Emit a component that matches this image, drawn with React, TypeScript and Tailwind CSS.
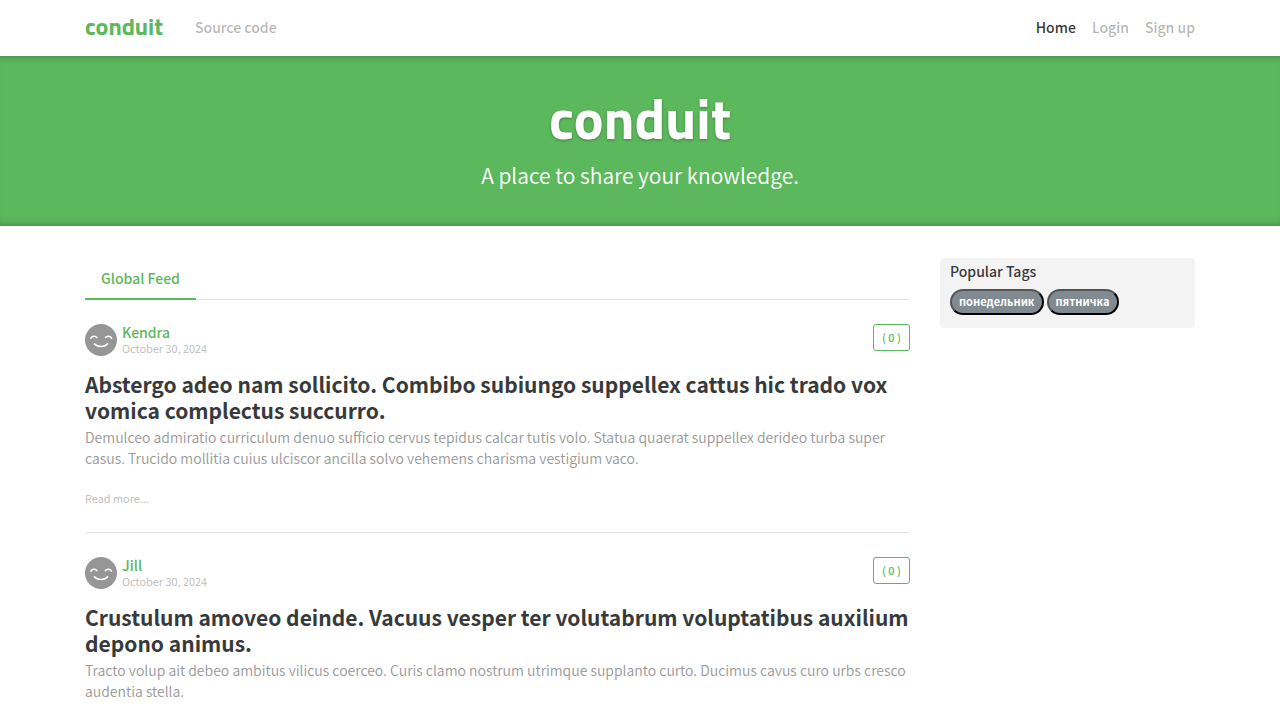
type Article = {
  author: string;
  date: string;
  title: string;
  description: string;
  favorites: number;
};

const articles: Article[] = [
  {
    author: 'Kendra',
    date: 'October 30, 2024',
    title: 'Abstergo adeo nam sollicito. Combibo subiungo suppellex cattus hic trado vox vomica complectus succurro.',
    description:
      'Demulceo admiratio curriculum denuo sufficio cervus tepidus calcar tutis volo. Statua quaerat suppellex derideo turba super casus. Trucido mollitia cuius ulciscor ancilla solvo vehemens charisma vestigium vaco.',
    favorites: 0,
  },
  {
    author: 'Jill',
    date: 'October 30, 2024',
    title: 'Crustulum amoveo deinde. Vacuus vesper ter volutabrum voluptatibus auxilium depono animus.',
    description:
      'Tracto volup ait debeo ambitus vilicus coerceo. Curis clamo nostrum utrimque supplanto curto. Ducimus cavus curo urbs cresco audentia stella.',
    favorites: 0,
  },
];

const tags = ['понедельник', 'пятничка'];

function Smiley() {
  return (
    <svg viewBox="0 0 32 32" className="size-8 shrink-0" aria-hidden="true">
      <circle cx="16" cy="16" r="16" fill="#969696" />
      <g fill="none" stroke="#fff" strokeWidth="1.6" strokeLinecap="round">
        <path d="M5.9 14.2C6.7 11.9 10.7 11.6 11.9 13.6" />
        <path d="M20.5 13.6C21.7 11.6 25.7 11.9 26.5 14.2" />
        <path d="M9.4 19.8C12 23.4 20 23.4 22.6 19.8" />
      </g>
    </svg>
  );
}

function Navbar() {
  return (
    <nav className="mx-auto flex h-14 w-full max-w-[1140px] items-center px-[15px] pb-0.5">
      <a href="#home" className="mr-8 pb-0.5 font-[Titillium_Web,Noto_Sans_CJK_SC,sans-serif] text-[24px] leading-8 font-bold text-[#5cb85c]">
        conduit
      </a>
      <a href="#source" className="text-black/30">Source code</a>
      <div className="ml-auto flex gap-4">
        <a href="#home" className="text-black/80">Home</a>
        <a href="#login" className="text-black/30">Login</a>
        <a href="#signup" className="text-black/30">Sign up</a>
      </div>
    </nav>
  );
}

function Banner() {
  return (
    <header className="bg-[#5cb85c] px-4 pt-8 pb-[33px] text-center text-white shadow-[inset_0_8px_8px_-8px_rgba(0,0,0,0.3),inset_0_-8px_8px_-8px_rgba(0,0,0,0.3)]">
      <h1 className="mb-[7px] font-[Titillium_Web,Noto_Sans_CJK_SC,sans-serif] text-[56px] leading-[62px] font-bold [text-shadow:0_1px_3px_rgba(0,0,0,0.3)]">
        conduit
      </h1>
      <p className="text-[21px] leading-9 font-[350]">A place to share your knowledge.</p>
    </header>
  );
}

function ArticlePreview({ article }: { article: Article }) {
  return (
    <article className="border-t border-black/10 py-6">
      <div className="mb-[15px] flex h-8 items-start">
        <a href="#profile" aria-label={article.author}><Smiley /></a>
        <div className="ml-[5px] flex flex-col">
          <a href="#profile" className="leading-4 text-[#5cb85c]">{article.author}</a>
          <span className="text-[11px] leading-4 font-[350] text-[#bbb]">{article.date}</span>
        </div>
        <button type="button" className="ml-auto h-[27px] rounded-[3px] border border-[#5cb85c] px-2 pb-0.5 text-[11px] leading-4 text-[#5cb85c]">
          ( {article.favorites} )
        </button>
      </div>
      <a href="#article" className="block">
        <h2 className="mb-1 text-[21px] leading-[26px] font-bold text-[#373a3c]">{article.title}</h2>
        <p className="mb-[19px] leading-[21px] font-[350] text-[#999]">{article.description}</p>
        <span className="block text-[11px] leading-5 font-[350] text-[#bbb]">Read more...</span>
      </a>
    </article>
  );
}

export default function App() {
  return (
    <div className="min-h-screen bg-white font-[Source_Sans_Pro,Noto_Sans_CJK_SC,sans-serif] text-[14px] leading-6 font-medium text-[#373a3c]">
      <Navbar />
      <Banner />
      <main className="mx-auto mt-8 flex w-full max-w-[1140px] items-start">
        <section className="min-w-0 flex-1 px-[15px]">
          <div className="-mb-px flex">
            <a href="#feed" className="border-b-2 border-[#5cb85c] px-4 py-2 text-[#5cb85c]">Global Feed</a>
          </div>
          {articles.map((article) => (
            <ArticlePreview key={article.author} article={article} />
          ))}
        </section>
        <aside className="w-1/4 px-[15px]">
          <div className="rounded bg-[#f3f3f3] px-2.5 pt-px pb-[13px]">
            <p className="mb-1.5">Popular Tags</p>
            <div className="flex flex-wrap gap-[3px]">
              {tags.map((tag) => (
                <button
                  key={tag}
                  type="button"
                  className="h-[26px] rounded-full border-2 border-black bg-[#818a91] px-[7px] pb-0.5 text-[11px] leading-4 font-bold text-white [border-style:outset]"
                >
                  {tag}
                </button>
              ))}
            </div>
          </div>
        </aside>
      </main>
    </div>
  );
}
